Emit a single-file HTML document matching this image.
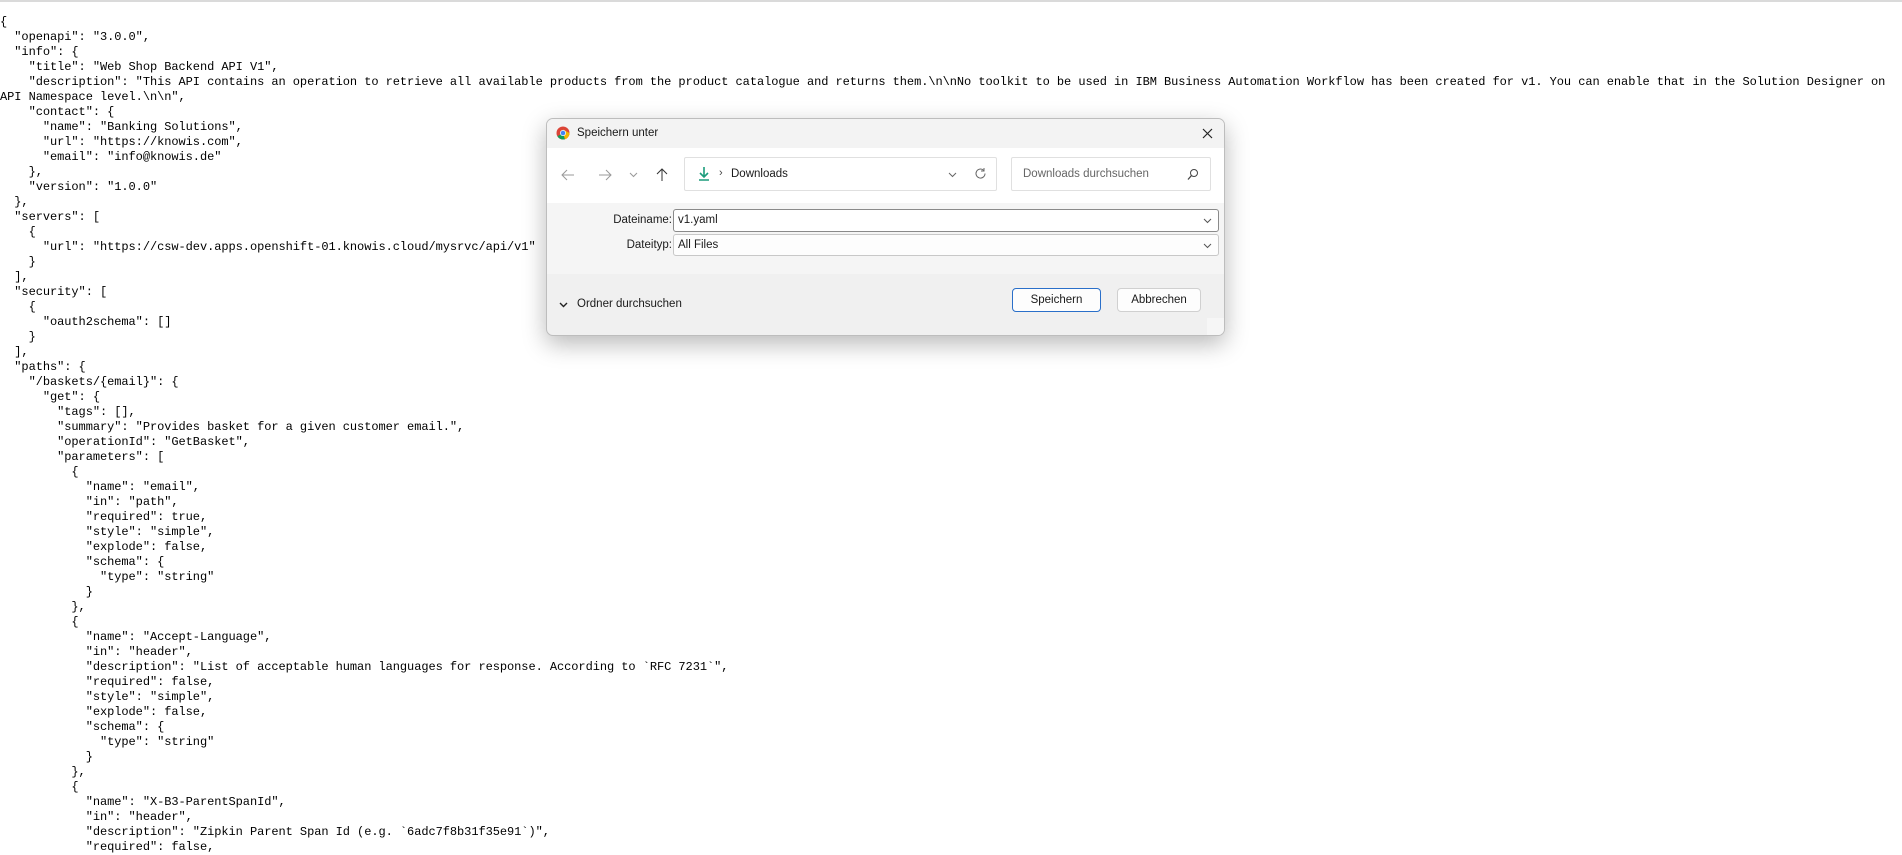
<!DOCTYPE html>
<html><head><meta charset="utf-8"><style>
html,body{margin:0;padding:0;background:#fff;width:1902px;height:853px;overflow:hidden}
.topline{position:absolute;left:0;top:0;width:1902px;height:2px;background:#dadada}
pre{position:absolute;left:0;top:15px;margin:0;font-family:"Liberation Mono",monospace;font-size:12px;line-height:15px;color:#000;letter-spacing:-0.06px}
.dlg{position:absolute;left:546px;top:118px;width:677px;height:216px;background:#f0f0f0;border:1px solid #bdbdbd;border-radius:7px;box-shadow:0 8px 24px rgba(0,0,0,.28);font-family:"Liberation Sans",sans-serif;font-size:11px;color:#1a1a1a;overflow:hidden}
.a{position:absolute}
.field{position:absolute;background:#fff;border:1px solid #c8c8c8;border-radius:3px;box-sizing:border-box}
.btn{position:absolute;background:#fdfdfd;border:1px solid #d0d0d0;border-radius:4px;box-sizing:border-box;text-align:center;line-height:22px;font-size:11.5px}
</style></head><body>
<div class="topline"></div>
<pre>{
  "openapi": "3.0.0",
  "info": {
    "title": "Web Shop Backend API V1",
    "description": "This API contains an operation to retrieve all available products from the product catalogue and returns them.\n\nNo toolkit to be used in IBM Business Automation Workflow has been created for v1. You can enable that in the Solution Designer on
API Namespace level.\n\n",
    "contact": {
      "name": "Banking Solutions",
      "url": "https://knowis.com",
      "email": "info@knowis.de"
    },
    "version": "1.0.0"
  },
  "servers": [
    {
      "url": "https://csw-dev.apps.openshift-01.knowis.cloud/mysrvc/api/v1"
    }
  ],
  "security": [
    {
      "oauth2schema": []
    }
  ],
  "paths": {
    "/baskets/{email}": {
      "get": {
        "tags": [],
        "summary": "Provides basket for a given customer email.",
        "operationId": "GetBasket",
        "parameters": [
          {
            "name": "email",
            "in": "path",
            "required": true,
            "style": "simple",
            "explode": false,
            "schema": {
              "type": "string"
            }
          },
          {
            "name": "Accept-Language",
            "in": "header",
            "description": "List of acceptable human languages for response. According to `RFC 7231`",
            "required": false,
            "style": "simple",
            "explode": false,
            "schema": {
              "type": "string"
            }
          },
          {
            "name": "X-B3-ParentSpanId",
            "in": "header",
            "description": "Zipkin Parent Span Id (e.g. `6adc7f8b31f35e91`)",
            "required": false,
</pre>
<div class="dlg">
  <div class="a" style="left:0;top:0;width:677px;height:29px;background:#f3f3f3"></div>
  <svg class="a" style="left:9px;top:7px" width="14" height="14" viewBox="0 0 14 14"><circle cx="7" cy="7" r="6.5" fill="#db4437"/><path d="M7 7 L1.4 10.2 A6.5 6.5 0 0 0 9 13.2Z" fill="#0f9d58"/><path d="M7 7 L9 13.2 A6.5 6.5 0 0 0 13.5 7 L7 3.5Z" fill="#f4b400"/><circle cx="7" cy="7" r="3" fill="#fff"/><circle cx="7" cy="7" r="2.3" fill="#4285f4"/></svg>
  <div class="a" style="left:30px;top:8px;font-size:11.5px">Speichern unter</div>
  <svg class="a" style="left:655px;top:9px" width="11" height="11"><path d="M1 1L10 10M10 1L1 10" stroke="#222" stroke-width="1.2"/></svg>
  <div class="a" style="left:0;top:29px;width:677px;height:55px;background:#fff"></div>
  <svg class="a" style="left:14px;top:50px" width="14" height="12"><path d="M13 6H1M6 1L1 6L6 11" stroke="#999" fill="none" stroke-width="1"/></svg>
  <svg class="a" style="left:51px;top:50px" width="14" height="12"><path d="M1 6H13M8 1L13 6L8 11" stroke="#999" fill="none" stroke-width="1"/></svg>
  <svg class="a" style="left:82px;top:53px" width="9" height="6"><path d="M1 1L4.5 4.5L8 1" stroke="#999" fill="none"/></svg>
  <svg class="a" style="left:109px;top:49px" width="12" height="14"><path d="M6 13V1M1 6L6 1L11 6" stroke="#333" fill="none"/></svg>
  <div class="field" style="left:137px;top:38px;width:313px;height:34px;border-color:#e0e0e0;border-radius:2px"></div>
  <svg class="a" style="left:151px;top:47px" width="12" height="16"><path d="M6 1V11M2 7L6 11L10 7M1 14H11" stroke="#1c9c7c" stroke-width="1.6" fill="none"/></svg>
  <div class="a" style="left:172px;top:48px;font-size:11px;color:#444">›</div>
  <div class="a" style="left:184px;top:49px;font-size:11.5px">Downloads</div>
  <svg class="a" style="left:401px;top:53px" width="9" height="6"><path d="M1 1L4.5 4.5L8 1" stroke="#666" fill="none"/></svg>
  <svg class="a" style="left:427px;top:48px" width="13" height="13"><path d="M11 6.5A4.5 4.5 0 1 1 9.5 3.2M10 1V4H7" stroke="#666" fill="none"/></svg>
  <div class="field" style="left:464px;top:38px;width:200px;height:34px;border-color:#e0e0e0;border-radius:2px"></div>
  <div class="a" style="left:476px;top:49px;font-size:11.5px;color:#666">Downloads durchsuchen</div>
  <svg class="a" style="left:640px;top:49px" width="12" height="13"><circle cx="7" cy="5" r="3.5" stroke="#444" fill="none"/><path d="M4.5 7.5L1 11.5" stroke="#444" stroke-width="1.3"/></svg>
  <div class="a" style="left:0;top:84px;width:677px;height:71px;background:#f5f5f5"></div>
  <div class="a" style="left:0;width:125px;text-align:right;top:95px;font-size:11.5px">Dateiname:</div>
  <div class="field" style="left:126px;top:90px;width:546px;height:23px;border-color:#8a8a8a"></div>
  <div class="a" style="left:131px;top:95px;font-size:11.5px">v1.yaml</div>
  <svg class="a" style="left:656px;top:99px" width="9" height="6"><path d="M1 1L4.5 4.5L8 1" stroke="#555" fill="none"/></svg>
  <div class="a" style="left:0;width:125px;text-align:right;top:120px;font-size:11.5px">Dateityp:</div>
  <div class="field" style="left:126px;top:115px;width:546px;height:22px;background:#fdfdfd"></div>
  <div class="a" style="left:131px;top:120px;font-size:11.5px">All Files</div>
  <svg class="a" style="left:656px;top:124px" width="9" height="6"><path d="M1 1L4.5 4.5L8 1" stroke="#555" fill="none"/></svg>
  <svg class="a" style="left:12px;top:183px" width="9" height="6"><path d="M1 1L4.5 4.5L8 1" stroke="#222" stroke-width="1.4" fill="none"/></svg>
  <div class="a" style="left:30px;top:179px;font-size:11.5px">Ordner durchsuchen</div>
  <div class="btn" style="left:465px;top:169px;width:89px;height:24px;border-color:#2a6fc9">Speichern</div>
  <div class="btn" style="left:570px;top:169px;width:84px;height:24px">Abbrechen</div>
  <div class="a" style="left:660px;top:199px;width:17px;height:17px;background:#f6f6f6"></div>
</div>
</body></html>
